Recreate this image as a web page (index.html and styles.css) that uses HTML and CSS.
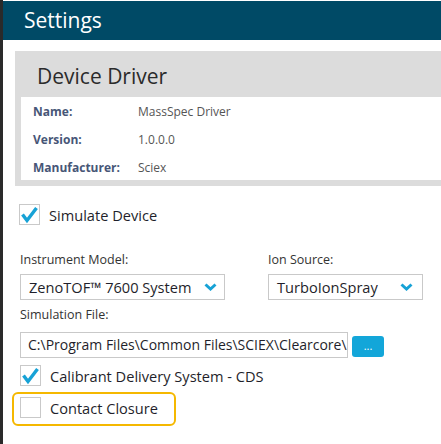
FILE: index.html
```html
<!DOCTYPE html>
<html>
<head>
<meta charset="utf-8">
<link rel="stylesheet" href="styles.css">
</head>
<body>
<div class="frame">
  <div class="header">Settings</div>
  <div class="content">
    <div class="panel">
      <div class="panel-title">Device Driver</div>
      <div class="info">
        <div class="info-row"><span class="info-label">Name:</span><span class="info-value">MassSpec Driver</span></div>
        <div class="info-row"><span class="info-label">Version:</span><span class="info-value">1.0.0.0</span></div>
        <div class="info-row"><span class="info-label">Manufacturer:</span><span class="info-value">Sciex</span></div>
      </div>
    </div>
    <div class="form">
      <label class="check check-sim">
        <span class="box"><svg viewBox="0 0 21 21" width="21" height="21"><polyline points="3.5,10.5 8,16.5 17.5,4" fill="none" stroke="#17a2d6" stroke-width="3.4" stroke-linejoin="miter" stroke-linecap="butt"/></svg></span>
        <span class="check-text">Simulate Device</span>
      </label>
      <div class="selects">
        <div class="field">
          <div class="field-label">Instrument Model:</div>
          <div class="select select-wide"><span>ZenoTOF™ 7600 System</span><svg class="chev" viewBox="0 0 13 8" width="13" height="8"><polyline points="1.5,1.5 6.5,6 11.5,1.5" fill="none" stroke="#17a2d6" stroke-width="3"/></svg></div>
        </div>
        <div class="field">
          <div class="field-label">Ion Source:</div>
          <div class="select select-narrow"><span>TurboIonSpray</span><svg class="chev" viewBox="0 0 13 8" width="13" height="8"><polyline points="1.5,1.5 6.5,6 11.5,1.5" fill="none" stroke="#17a2d6" stroke-width="3"/></svg></div>
        </div>
      </div>
      <div class="field-label sim-label">Simulation File:</div>
      <div class="file-row">
        <div class="file-input"><span class="file-text">C:\Program Files\Common Files\SCIEX\Clearcore\</span></div>
        <div class="browse">...</div>
      </div>
      <label class="check check-cds">
        <span class="box"><svg viewBox="0 0 21 21" width="21" height="21"><polyline points="3.5,10.5 8,16.5 17.5,4" fill="none" stroke="#17a2d6" stroke-width="3.4" stroke-linejoin="miter" stroke-linecap="butt"/></svg></span>
        <span class="check-text">Calibrant Delivery System - CDS</span>
      </label>
      <div class="highlight">
        <label class="check">
          <span class="box"></span>
          <span class="check-text">Contact Closure</span>
        </label>
      </div>
    </div>
  </div>
</div>
</body>
</html>
```
FILE: styles.css
```css
* { box-sizing: border-box; }
html, body { margin: 0; padding: 0; background: #fff; }
body {
  font-family: "Open Sans", "Noto Sans", "Liberation Sans", sans-serif;
  color: #1f1f2b;
  width: 441px;
  height: 444px;
  overflow: hidden;
}
.frame {
  border-left: 3px solid #2a2a2a;
  padding-top: 1px;
  height: 444px;
}
.header {
  height: 39px;
  background: #004a66;
  color: #fff;
  font-size: 21px;
  line-height: 39px;
  padding-left: 21px;
}
.content {
  padding: 11px 0 0 12px;
}
.panel {
  background: #dcdcdc;
  padding: 0 0 6px 6px;
}
.panel-title {
  height: 46px;
  font-size: 21px;
  line-height: 46px;
  padding-left: 16px;
  padding-top: 2px;
  color: #2b2b2b;
}
.info {
  background: #fff;
  height: 83px;
  padding: 0 0 0 12px;
}
.info-row {
  height: 28px;
  display: flex;
  align-items: center;
  font-size: 12px;
}
.info-label {
  width: 105px;
  font-weight: bold;
  color: #475677;
}
.info-value {
  color: #555;
}
.form {
  padding: 18px 0 0 5px;
  display: flex;
  flex-direction: column;
  align-items: flex-start;
}
.check {
  display: flex;
  align-items: center;
  height: 21px;
}
.box {
  width: 21px;
  height: 21px;
  border: 1px solid #c9c9c9;
  background: #fff;
  position: relative;
  flex: none;
}
.box svg {
  position: absolute;
  left: -1px;
  top: -1px;
}
.check-text {
  font-size: 14.6px;
  margin-left: 9px;
}
.check-sim { margin-left: -1px; }
.selects {
  display: grid;
  grid-template-columns: 205px 155px;
  column-gap: 43px;
  margin-top: 26px;
}
.field-label {
  font-size: 12.5px;
  line-height: 18px;
  color: #333;
}
.select {
  margin-top: 5px;
  height: 26px;
  border: 1px solid #c9c9c9;
  display: flex;
  align-items: center;
  justify-content: space-between;
  padding: 0 7px 0 8px;
  font-size: 14.6px;
}
.select-narrow .chev { margin-right: 2px; }
.sim-label { margin-top: 6px; }
.file-row {
  margin-top: 8px;
  display: flex;
  align-items: center;
}
.file-input {
  width: 328px;
  height: 26px;
  border: 1px solid #c9c9c9;
  font-size: 14px;
  line-height: 24px;
  padding-left: 7px;
  white-space: nowrap;
  overflow: hidden;
}
.browse {
  margin-left: 4px;
  margin-top: 3px;
  width: 32px;
  height: 21px;
  background: #13a6d9;
  border-radius: 3px;
  color: #fff;
  font-size: 11px;
  line-height: 19px;
  text-align: center;
}
.check-cds { margin-top: 7px; }
.highlight {
  margin-top: 6px;
  margin-left: -8px;
  border: 2px solid #f5b800;
  border-radius: 6px;
  padding: 3px 16px 6px 6px;
}
```
